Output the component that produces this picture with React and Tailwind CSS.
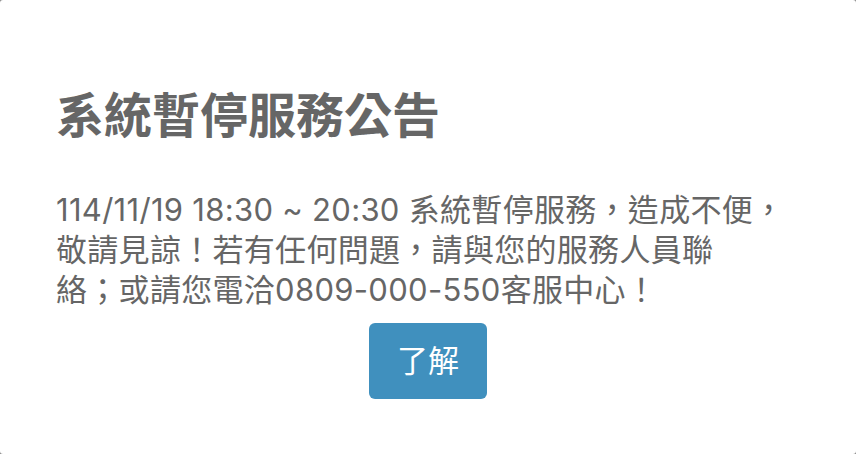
export default function App() {
  return (
    <div className="w-[856px] h-[454px] bg-[#8a8a8a]">
      <div className="h-full rounded-[3px] bg-white pt-[87px] px-[56px] font-[Inter,'Noto_Sans_CJK_TC',sans-serif] text-[#666666]">
        <h1 className="text-[48px] leading-[1.2] font-bold">系統暫停服務公告</h1>
        <p className="mt-[45px] text-[31px] leading-[40px] tracking-[0.3px]">
          114/11/19 18:30 ~ 20:30 系統暫停服務，造成不便，
          <br />
          敬請見諒！若有任何問題，請與您的服務人員聯
          <br />
          絡；或請您電洽0809-000-550客服中心！
        </p>
        <div className="mt-[13px] flex justify-center">
          <button className="h-[76px] px-[28px] rounded-[6px] bg-[#4090be] text-white text-[31px] leading-none">
            了解
          </button>
        </div>
      </div>
    </div>
  );
}
